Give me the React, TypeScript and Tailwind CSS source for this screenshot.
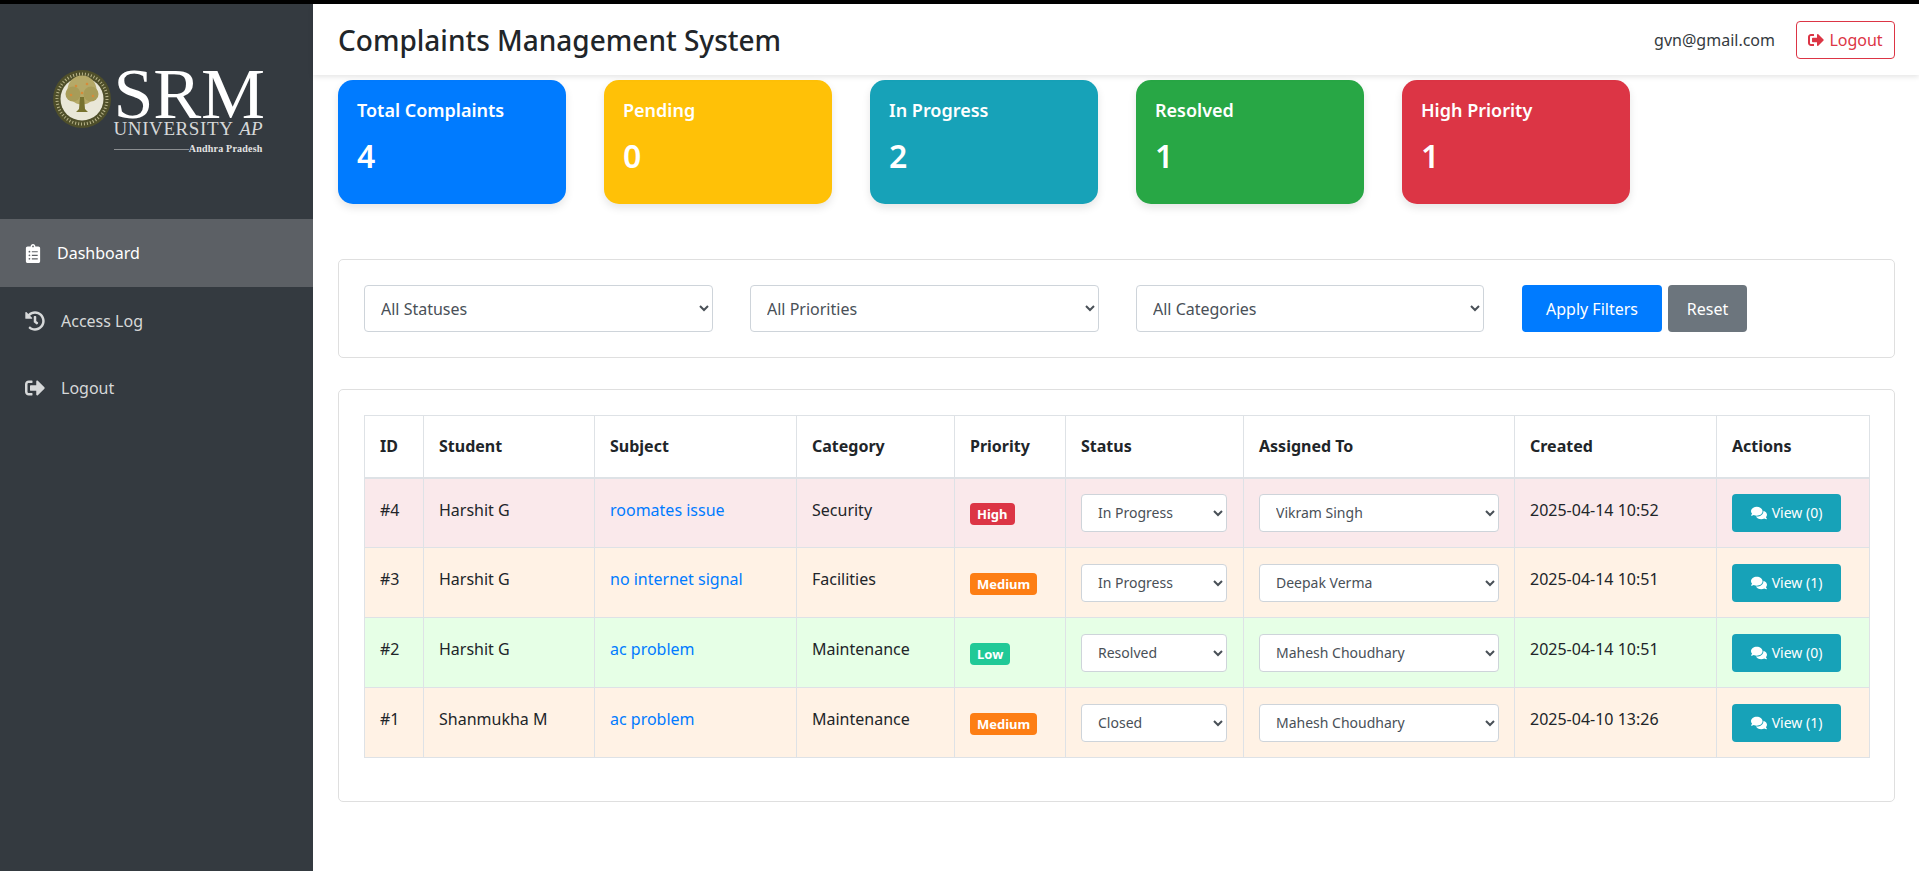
import React from "react";
import { FaClipboardList, FaHistory, FaSignOutAlt, FaComments } from "react-icons/fa";

const stats = [
  { label: "Total Complaints", value: 4, bg: "bg-[#007bff]" },
  { label: "Pending", value: 0, bg: "bg-[#ffc107]" },
  { label: "In Progress", value: 2, bg: "bg-[#17a2b8]" },
  { label: "Resolved", value: 1, bg: "bg-[#28a745]" },
  { label: "High Priority", value: 1, bg: "bg-[#dc3545]" },
];

const rows = [
  { id: 4, student: "Harshit G", subject: "roomates issue", category: "Security", priority: "High", status: "In Progress", agent: "Vikram Singh", created: "2025-04-14 10:52", comments: 0 },
  { id: 3, student: "Harshit G", subject: "no internet signal", category: "Facilities", priority: "Medium", status: "In Progress", agent: "Deepak Verma", created: "2025-04-14 10:51", comments: 1 },
  { id: 2, student: "Harshit G", subject: "ac problem", category: "Maintenance", priority: "Low", status: "Resolved", agent: "Mahesh Choudhary", created: "2025-04-14 10:51", comments: 0 },
  { id: 1, student: "Shanmukha M", subject: "ac problem", category: "Maintenance", priority: "Medium", status: "Closed", agent: "Mahesh Choudhary", created: "2025-04-10 13:26", comments: 1 },
];

const rowColor = (priority: string) => {
  switch (priority) {
    case "High":
      return "bg-[#fae9eb]";
    case "Medium":
      return "bg-[#fff2e5]";
    default:
      return "bg-[#e6ffe6]";
  }
};

const badgeColor = (priority: string) => {
  switch (priority) {
    case "High":
      return "bg-[#dc3545]";
    case "Medium":
      return "bg-[#fd7e14]";
    default:
      return "bg-[#20c997]";
  }
};

const th = "border border-[#dee2e6] border-b-2 px-[15px] text-left font-bold align-middle";
const td = "border border-[#dee2e6] px-[15px] pt-[19px] align-top";
const tdControl = "border border-[#dee2e6] px-[15px] align-middle";
const selectBase = "rounded border border-[#ced4da] bg-white text-[#495057]";

function Logo() {
  return (
    <div className="flex h-[215px] items-center justify-center pl-[1px]">
      <div className="flex items-start gap-[2px] pt-[1px]">
        <svg width="60" height="60" viewBox="0 0 60 60" className="mt-[1px]">
          <circle cx="30" cy="30" r="29" fill="#4f4f2a" />
          <circle cx="30" cy="30" r="21.5" fill="#e9e7d8" />
          <circle cx="30" cy="21" r="14.5" fill="#b5a968" />
          <circle cx="21" cy="25" r="7.5" fill="#a89c58" />
          <circle cx="39" cy="25" r="7.5" fill="#a89c58" />
          <circle cx="24" cy="17" r="1.3" fill="#d58b3a" />
          <circle cx="35" cy="15" r="1.3" fill="#d58b3a" />
          <circle cx="30" cy="24" r="1.3" fill="#d58b3a" />
          <circle cx="19" cy="26" r="1.3" fill="#d58b3a" />
          <circle cx="41" cy="27" r="1.3" fill="#d58b3a" />
          <path d="M28 28h4l1 12 3 3H24l3-3z" fill="#77722f" />
          <circle cx="30" cy="30" r="25" fill="none" stroke="#b8b48a" strokeWidth="3" strokeDasharray="1 2" />
        </svg>
        <div className="flex w-[149px] flex-col font-['Liberation_Serif',serif] text-white">
          <div className="h-[50px] text-[72px] leading-[50px] tracking-[-0.3px] pt-[1px]">SRM</div>
          <div className="flex h-[20px] items-center justify-between whitespace-nowrap text-[19px] leading-[20px] text-[#d6d8d9] mt-[1px]">
            <span className="tracking-[0.6px]">UNIVERSITY</span>
            <span className="italic">AP</span>
          </div>
          <div className="mt-[3px] flex items-center">
            <div className="h-[1px] flex-1 bg-[#8b8e91]" />
            <span className="whitespace-nowrap text-[10px] font-bold leading-[14px] tracking-[0.2px] text-[#e4e4e4]">Andhra Pradesh</span>
          </div>
        </div>
      </div>
    </div>
  );
}

function Sidebar() {
  return (
    <aside className="w-[313px] shrink-0 bg-[#343a40]">
      <Logo />
      <nav className="flex flex-col">
        <a className="flex h-[68px] items-center bg-[#5c6065] pl-[25px] text-white">
          <FaClipboardList className="w-[16px] h-[19px] mr-[16px]" />
          Dashboard
        </a>
        <a className="flex h-[67px] items-center pl-[25px] text-[#d6d8d9]">
          <FaHistory className="w-[20px] h-[20px] mr-[16px]" />
          Access Log
        </a>
        <a className="flex h-[68px] items-center pl-[25px] text-[#d6d8d9]">
          <FaSignOutAlt className="w-[20px] h-[20px] mr-[16px]" />
          Logout
        </a>
      </nav>
    </aside>
  );
}

function Header() {
  return (
    <header className="relative z-10 flex h-[71px] items-center justify-between bg-white pl-[25px] pr-[24px] shadow-[0_2px_5px_rgba(0,0,0,0.1)]">
      <h1 className="text-[28px] font-medium text-[#212529]">Complaints Management System</h1>
      <div className="flex items-center gap-[21px]">
        <span className="text-[#343a40]">gvn@gmail.com</span>
        <button className="flex h-[38px] w-[99px] items-center justify-center gap-[5px] rounded border border-[#dc3545] text-[#dc3545]">
          <FaSignOutAlt className="h-[16px] w-[16px]" />
          Logout
        </button>
      </div>
    </header>
  );
}

function Filters() {
  return (
    <section className="mx-[25px] mt-[55px] mr-[24px] flex h-[99px] items-center rounded-[5px] border border-[#dfdfdf] pl-[25px]">
      <select className={`${selectBase} h-[47px] w-[349px] px-[12px]`}>
        <option>All Statuses</option>
      </select>
      <select className={`${selectBase} ml-[37px] h-[47px] w-[349px] px-[12px]`}>
        <option>All Priorities</option>
      </select>
      <select className={`${selectBase} ml-[37px] h-[47px] w-[348px] px-[12px]`}>
        <option>All Categories</option>
      </select>
      <button className="ml-[38px] h-[47px] w-[140px] rounded bg-[#007bff] text-white">Apply Filters</button>
      <button className="ml-[6px] h-[47px] w-[79px] rounded bg-[#6c757d] text-white">Reset</button>
    </section>
  );
}

function ComplaintsTable() {
  return (
    <section className="mx-[25px] mt-[31px] mr-[24px] h-[413px] rounded-[5px] border border-[#dfdfdf] pl-[25px] pr-[25px] pt-[25px]">
      <table className="w-[1505px] table-fixed border-collapse text-[#212529]">
        <colgroup>
          <col className="w-[59px]" />
          <col className="w-[171px]" />
          <col className="w-[202px]" />
          <col className="w-[158px]" />
          <col className="w-[111px]" />
          <col className="w-[178px]" />
          <col className="w-[271px]" />
          <col className="w-[202px]" />
          <col className="w-[153px]" />
        </colgroup>
        <thead>
          <tr className="h-[62px]">
            {["ID", "Student", "Subject", "Category", "Priority", "Status", "Assigned To", "Created", "Actions"].map((name) => (
              <th key={name} className={th}>{name}</th>
            ))}
          </tr>
        </thead>
        <tbody>
          {rows.map((row) => (
            <tr key={row.id} className={`h-[70px] ${rowColor(row.priority)}`}>
              <td className={td}>#{row.id}</td>
              <td className={td}>{row.student}</td>
              <td className={td}>
                <a className="text-[#007bff]">{row.subject}</a>
              </td>
              <td className={td}>{row.category}</td>
              <td className={tdControl}>
                <span className={`inline-block rounded px-[7px] text-[13px] font-bold leading-[22px] text-white ${badgeColor(row.priority)}`}>
                  {row.priority}
                </span>
              </td>
              <td className={tdControl}>
                <select defaultValue={row.status} className={`${selectBase} h-[38px] w-[146px] px-[12px] text-[14px]`}>
                  <option>In Progress</option>
                  <option>Resolved</option>
                  <option>Closed</option>
                </select>
              </td>
              <td className={tdControl}>
                <select defaultValue={row.agent} className={`${selectBase} h-[38px] w-[240px] px-[12px] text-[14px]`}>
                  <option>Vikram Singh</option>
                  <option>Deepak Verma</option>
                  <option>Mahesh Choudhary</option>
                </select>
              </td>
              <td className={td}>{row.created}</td>
              <td className={tdControl}>
                <button className="flex h-[38px] w-[109px] items-center justify-center gap-[5px] rounded bg-[#17a2b8] text-[14px] text-white">
                  <FaComments className="h-[16px] w-[16px]" />
                  View ({row.comments})
                </button>
              </td>
            </tr>
          ))}
        </tbody>
      </table>
    </section>
  );
}

export default function App() {
  return (
    <div className="flex h-screen flex-col overflow-hidden bg-white font-['Noto_Sans',sans-serif] text-[16px]">
      <div className="h-[4px] shrink-0 bg-black" />
      <div className="flex min-h-0 flex-1">
        <Sidebar />
        <main className="min-w-0 flex-1">
          <Header />
          <div className="mt-[5px] flex gap-[38px] pl-[25px]">
            {stats.map((card) => (
              <div key={card.label} className={`h-[124px] w-[228px] rounded-[15px] px-[19px] pt-[17px] text-white shadow-[0_4px_8px_rgba(0,0,0,0.1)] ${card.bg}`}>
                <div className="text-[18px] font-semibold leading-[27px]">{card.label}</div>
                <div className="mt-[8px] text-[32px] font-semibold leading-[48px]">{card.value}</div>
              </div>
            ))}
          </div>
          <Filters />
          <ComplaintsTable />
        </main>
      </div>
    </div>
  );
}
